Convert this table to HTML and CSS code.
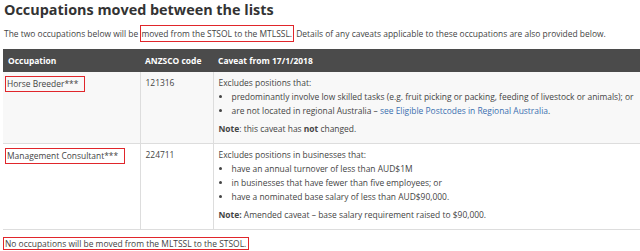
FILE: index.html
```html
<!DOCTYPE html>
<html>
<head>
<meta charset="utf-8">
<link rel="stylesheet" href="styles.css">
</head>
<body>
<h1 class="title">Occupations moved between the lists</h1>
<p class="intro">The two occupations below will be <span class="mark mark-inline">moved from the STSOL to the MTLSSL.</span> Details of any caveats applicable to these occupations are also provided below.</p>
<table class="occ">
  <colgroup>
    <col class="col-occ">
    <col class="col-code">
    <col class="col-cav">
  </colgroup>
  <thead>
    <tr>
      <th>Occupation</th>
      <th>ANZSCO code</th>
      <th>Caveat from 17/1/2018</th>
    </tr>
  </thead>
  <tbody>
    <tr class="r1">
      <td><span class="mark mark-cell">Horse Breeder***</span></td>
      <td>121316</td>
      <td>
        <div>Excludes positions that:</div>
        <ul>
          <li>predominantly involve low skilled tasks (e.g. fruit picking or packing, feeding of livestock or animals); or</li>
          <li>are not located in regional Australia – <a href="#">see Eligible Postcodes in Regional Australia</a>.</li>
        </ul>
        <div class="note"><b>Note</b>: this caveat has <b>not</b> changed.</div>
      </td>
    </tr>
    <tr class="r2">
      <td><span class="mark mark-cell">Management Consultant***</span></td>
      <td>224711</td>
      <td>
        <div>Excludes positions in businesses that:</div>
        <ul>
          <li>have an annual turnover of less than AUD$1M</li>
          <li>in businesses that have fewer than five employees; or</li>
          <li>have a nominated base salary of less than AUD$90,000.</li>
        </ul>
        <div class="note"><b>Note:</b> Amended caveat – base salary requirement raised to $90,000.</div>
      </td>
    </tr>
  </tbody>
</table>
<p class="outro"><span class="mark mark-block">No occupations will be moved from the MLTSSL to the STSOL.</span></p>
</body>
</html>
```
FILE: styles.css
```css
html, body {
  margin: 0;
  padding: 0;
  background: #fff;
}
body {
  padding: 0 0 0 3px;
  font-family: "Open Sans", "DejaVu Sans", sans-serif;
  font-size: 8.45px;
  line-height: 14px;
  color: #444;
  overflow: hidden;
}
.title {
  margin: 0;
  padding: 0 0 0 1px;
  font-size: 14.4px;
  line-height: 20px;
  font-weight: 700;
  color: #333;
}
.intro {
  margin: 5px 0 6px 1px;
  line-height: 18px;
}
.mark {
  border: 1.5px solid #e0262b;
}
.mark-inline {
  padding: 2px 1px 2px 0;
}
.mark-cell {
  display: inline-block;
  padding: 0 6px 0 1px;
  margin-left: -3px;
  line-height: 14px;
}
.occ {
  width: 637px;
  border-collapse: collapse;
  table-layout: fixed;
}
.col-occ { width: 137px; }
.col-code { width: 73px; }
.col-cav { width: 427px; }
.occ th,
.occ td {
  box-sizing: border-box;
}
.occ th {
  background: #4b4b4b;
  color: #fff;
  text-align: left;
  font-weight: 700;
  height: 23px;
  padding: 0 5px;
}
.occ td {
  vertical-align: top;
  padding: 4px 5px 7px;
  border-bottom: 1px solid #ddd;
  border-left: 1px solid #ddd;
}
.occ td:first-child { border-left: none; }
.r1 td { background: #f8f8f8; }
.r2 td { background: #fff; }
.occ ul {
  margin: 0;
  padding: 0 0 0 13px;
}
.occ li {
  list-style: disc;
}
.note {
  margin-top: 4px;
}
.occ a {
  color: #3a6fb0;
  text-decoration: none;
}
.outro {
  margin: 7px 0 0 0;
}
.mark-block {
  display: inline-block;
  padding: 0 2px 0 1px;
  line-height: 11px;
}
```
